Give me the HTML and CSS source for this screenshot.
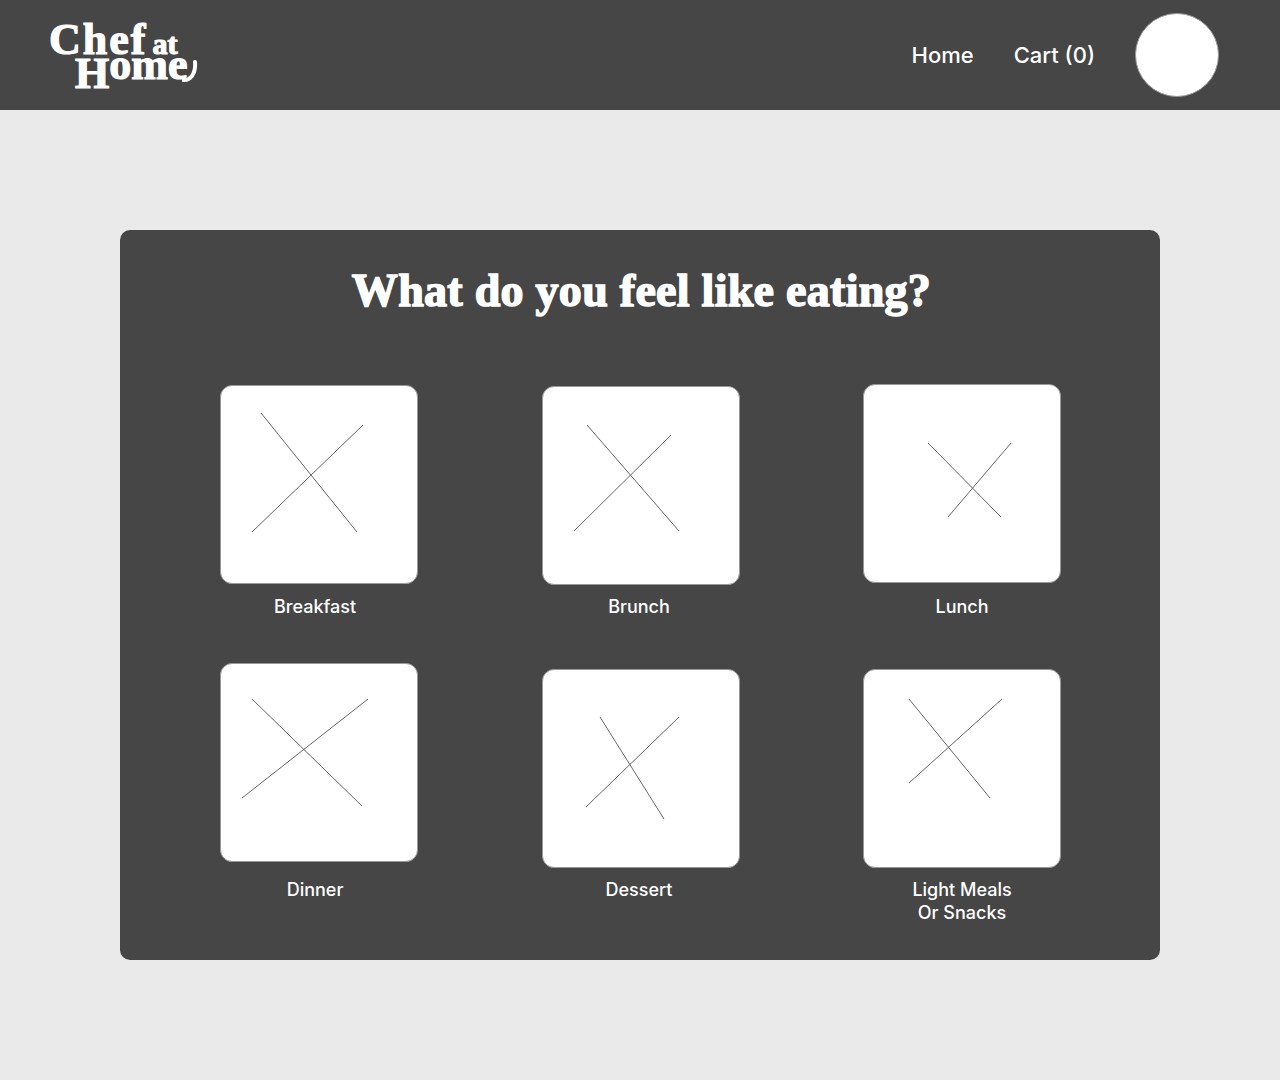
FILE: index.html
```html
<!DOCTYPE html>
<html lang="en">
<head>
    <meta charset="UTF-8">
    <meta name="viewport" content="width=device-width, initial-scale=1.0">
    <title>Chef at Home</title>
    <link rel="stylesheet" href="styles.css">
</head>
<body>
    <header class="nav">
        <a class="logo" href="#">
            <span class="logo-top">Chef <small>at</small></span>
            <span class="logo-bottom">H<span class="logo-ome">ome</span><svg class="logo-swash" viewBox="0 0 16 24"><path d="M1 21C8 22 14 15 13 3" fill="none" stroke="#fff" stroke-width="4" stroke-linecap="round"/></svg></span>
        </a>
        <nav class="nav-links">
            <a href="#">Home</a>
            <a href="#">Cart (0)</a>
            <div class="avatar"></div>
        </nav>
    </header>
    <main class="page">
        <section class="panel">
            <h1 class="title">What do you feel like eating?</h1>
            <div class="meals">
                <div class="meal">
                    <div class="thumb-slot"><div class="thumb shift-1">
                        <svg viewBox="1 0 196 197"><path d="M41 27L137 146M143 39L32 146"/></svg>
                    </div></div>
                    <p class="label label-left">Breakfast</p>
                </div>
                <div class="meal">
                    <div class="thumb-slot"><div class="thumb shift-2">
                        <svg viewBox="1 0 196 197"><path d="M45 38L137 144M129 48L32 144"/></svg>
                    </div></div>
                    <p class="label label-mid">Brunch</p>
                </div>
                <div class="meal">
                    <div class="thumb-slot"><div class="thumb">
                        <svg viewBox="1 0 196 197"><path d="M65 58L138 132M148 58L85 132"/></svg>
                    </div></div>
                    <p class="label">Lunch</p>
                </div>
                <div class="meal">
                    <div class="thumb-slot tall"><div class="thumb">
                        <svg viewBox="1 0 196 197"><path d="M32 35L142 142M148 35L22 134"/></svg>
                    </div></div>
                    <p class="label label-left">Dinner</p>
                </div>
                <div class="meal">
                    <div class="thumb-slot tall"><div class="thumb shift-6">
                        <svg viewBox="1 0 196 197"><path d="M58 47L122 149M137 47L44 137"/></svg>
                    </div></div>
                    <p class="label label-mid">Dessert</p>
                </div>
                <div class="meal">
                    <div class="thumb-slot tall"><div class="thumb shift-6">
                        <svg viewBox="1 0 196 197"><path d="M46 29L127 128M139 29L46 113"/></svg>
                    </div></div>
                    <p class="label">Light Meals<br>Or Snacks</p>
                </div>
            </div>
        </section>
    </main>
</body>
</html>
```

FILE: styles.css
```css
body {
    margin: 0;
    background-color: #eaeaea;
    color: white;
    font-family: Inter, sans-serif;
}
a {
    color: white;
    text-decoration: none;
}
.nav {
    height: 110px;
    box-sizing: border-box;
    padding: 0 61px 0 49px;
    background: #464646;
    display: flex;
    justify-content: space-between;
    align-items: center;
}
.logo {
    display: flex;
    flex-direction: column;
    padding-top: 2px;
    font-family: "Liberation Serif", serif;
    font-weight: bold;
    font-size: 44px;
    -webkit-text-stroke: 1.2px white;
}
.logo-top {
    padding-top: 2px;
    line-height: 32px;
    white-space: nowrap;
    letter-spacing: 2px;
}
.logo-top small {
    font-size: 30px;
    letter-spacing: 0;
    margin-left: -8px;
}
.logo-bottom {
    display: flex;
    align-items: baseline;
    margin: -2px 0 0 26px;
    line-height: 32px;
}
.logo-ome {
    position: relative;
    top: -9px;
}
.logo-swash {
    width: 16px;
    height: 24px;
    margin-left: -5px;
    position: relative;
    top: -5px;
}
.nav-links {
    display: flex;
    align-items: center;
    gap: 40px;
    font-size: 22px;
    font-weight: 500;
}
.avatar {
    width: 84px;
    height: 84px;
    box-sizing: border-box;
    border-radius: 50%;
    background: white;
    border: 1px solid #999;
}
.page {
    padding: 120px 120px;
}
.panel {
    height: 730px;
    box-sizing: border-box;
    padding: 35px 99px 0 100px;
    background: #464646;
    border-radius: 10px;
}
.title {
    margin: 0 0 67px;
    padding-left: 2px;
    font-family: "Liberation Serif", serif;
    font-size: 46px;
    line-height: 52px;
    letter-spacing: 0.28px;
    text-align: center;
    -webkit-text-stroke: 1.5px white;
}
.meals {
    display: grid;
    grid-template-columns: repeat(3, 198px);
    column-gap: 123.5px;
    row-gap: 45px;
}
.thumb-slot {
    display: flex;
    align-items: flex-start;
    height: 201px;
}
.thumb-slot.tall {
    height: 205px;
}
.thumb {
    width: 198px;
    height: 199px;
    box-sizing: border-box;
    background: white;
    border: 1px solid #999;
    border-radius: 12px;
}
.thumb svg {
    display: block;
    width: 196px;
    height: 197px;
}
.thumb path {
    fill: none;
    stroke: #555;
    stroke-width: 0.9;
}
.shift-1 {
    margin-top: 1px;
}
.shift-2 {
    margin-top: 2px;
}
.shift-6 {
    margin-top: 6px;
}
.label {
    margin: 10px 0 0;
    font-size: 18px;
    line-height: 23px;
    font-weight: 500;
    text-align: center;
}
.label-left {
    padding-right: 8px;
}
.label-mid {
    padding-right: 3px;
}
```
